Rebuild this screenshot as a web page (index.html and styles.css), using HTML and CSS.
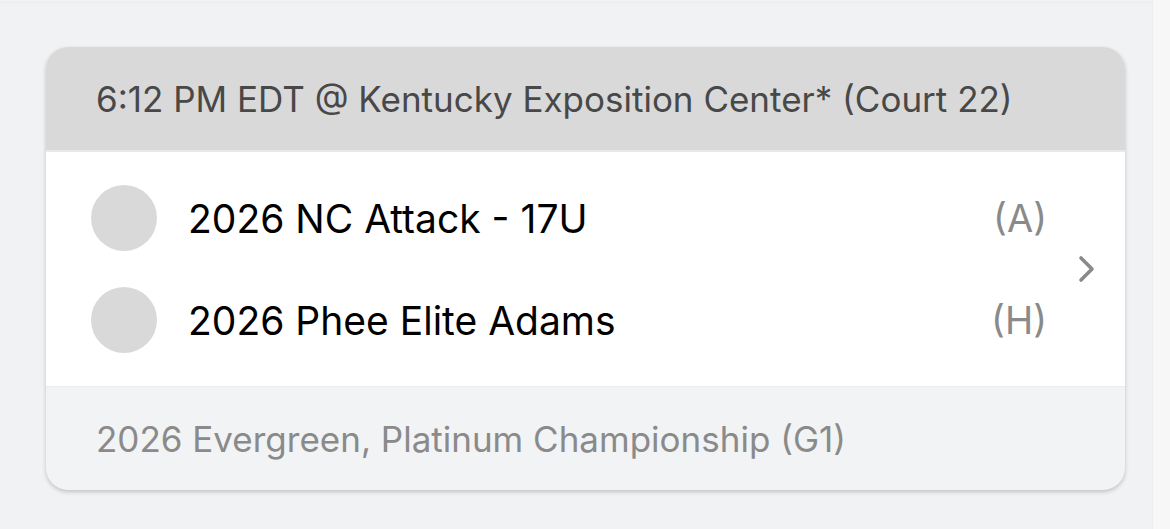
FILE: index.html
```html
<!DOCTYPE html>
<html>
<head>
<meta charset="utf-8">
<link rel="stylesheet" href="styles.css">
</head>
<body>
<div class="page">
  <main class="main">
    <div class="topline"></div>
    <section class="card">
      <header class="card-head">6:12 PM EDT @ Kentucky Exposition Center* (Court 22)</header>
      <div class="card-body">
        <div class="teams">
          <div class="team">
            <span class="avatar"></span>
            <span class="name">2026 NC Attack - 17U</span>
            <span class="side">(A)</span>
          </div>
          <div class="team">
            <span class="avatar"></span>
            <span class="name">2026 Phee Elite Adams</span>
            <span class="side">(H)</span>
          </div>
        </div>
        <svg class="chev" width="20" height="30" viewBox="0 0 20 30"><path d="M4 4 L15 15 L4 26" fill="none" stroke="#8a8a8a" stroke-width="3.6" stroke-linecap="round" stroke-linejoin="round"/></svg>
      </div>
      <footer class="card-foot">2026 Evergreen, Platinum Championship (G1)</footer>
    </section>
  </main>
  <div class="scroll"></div>
</div>
</body>
</html>
```
FILE: styles.css
```css
html, body {
  margin: 0;
  padding: 0;
  height: 100%;
}
body {
  background: #f1f2f4;
  font-family: Inter, "Liberation Sans", sans-serif;
  overflow: hidden;
}
.page {
  display: flex;
  height: 529px;
}
.main {
  flex: 1;
  padding: 0 27px 0 46px;
}
.topline {
  height: 1px;
  margin: 2px -27px 44px -46px;
  background: #ebecee;
}
.scroll {
  width: 18px;
  background: #f7f7f8;
  border-left: 1px solid #ededef;
  box-sizing: border-box;
}
.card {
  border-radius: 22px;
  overflow: hidden;
  box-shadow: 0 2px 4px rgba(0,0,0,0.2);
  background: #f2f3f5;
}
.card-head {
  height: 103px;
  background: #d9d9d9;
  color: #484848;
  font-size: 35px;
  display: flex;
  align-items: center;
  padding-left: 50px;
  border-bottom: 2px solid #e9e9e9;
}
.card-body {
  background: #fff;
  height: 234px;
  display: flex;
  align-items: center;
  padding: 0 28px 0 45px;
  border-bottom: 1px solid #ececee;
}
.teams {
  flex: 1;
  display: flex;
  flex-direction: column;
  gap: 36px;
}
.team {
  display: flex;
  align-items: center;
  height: 66px;
}
.avatar {
  width: 66px;
  height: 66px;
  border-radius: 50%;
  background: #d9d9d9;
  flex: none;
}
.name {
  flex: 1;
  margin-left: 31px;
  font-size: 39px;
  color: #000;
}
.side {
  font-size: 38px;
  color: #8a8a8a;
}
.chev {
  margin-left: 30px;
  flex: none;
}
.card-foot {
  height: 103px;
  display: flex;
  align-items: center;
  padding-left: 50px;
  font-size: 35px;
  color: #8a8a8a;
}
```
